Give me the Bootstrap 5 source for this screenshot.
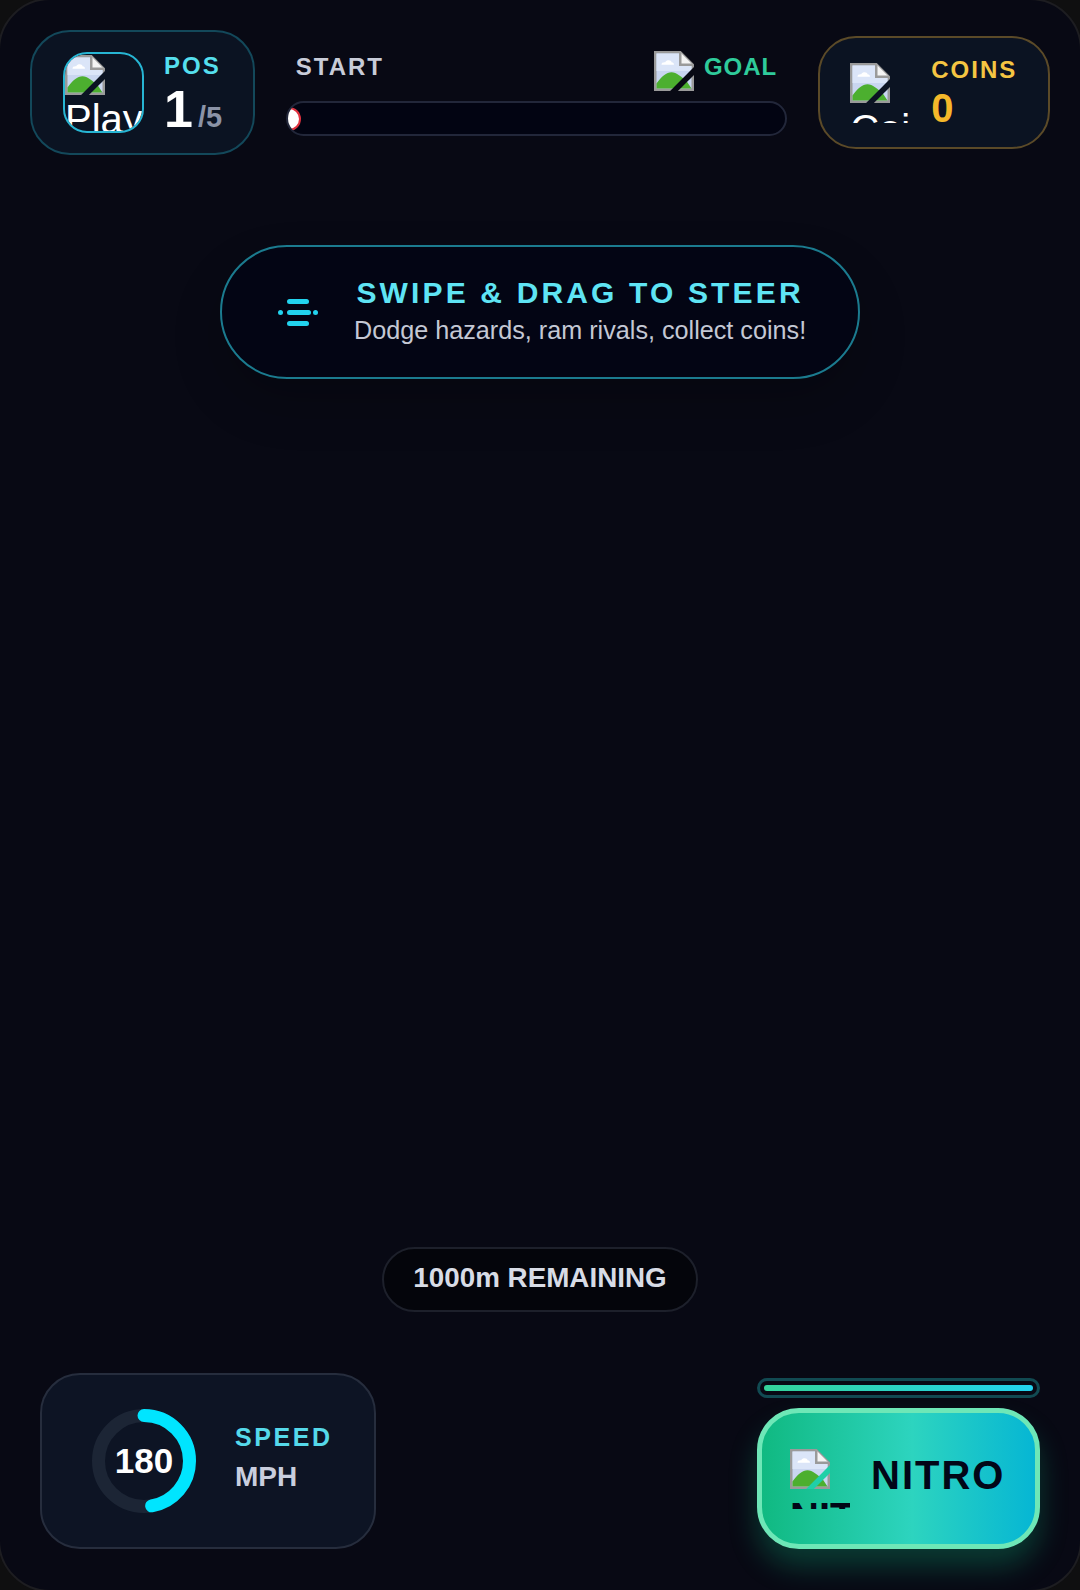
<!DOCTYPE html>
<html lang="en">
<head>
  <meta charset="UTF-8">
  <meta name="viewport" content="width=device-width, initial-scale=1.0">
  <title>Race HUD</title>
  <link href="https://cdn.jsdelivr.net/npm/bootstrap@5.3.0/dist/css/bootstrap.min.css" rel="stylesheet">
  <style>
    body {
      background-color: #0f0f10;
      font-family: "Liberation Sans", Arial, sans-serif;
      margin: 0;
      overflow: hidden;
    }
    .game-screen {
      width: 1084px;
      height: 1594px;
      margin: -2px;
      background-color: #080914;
      border: 2px solid #1d1d21;
      border-radius: 52px;
      overflow: hidden;
      padding: 30px 30px 41px;
    }
    .broken-pic {
      width: 40px;
      height: 40px;
      display: block;
      flex: none;
    }
    .hud-panel {
      background-color: #0b1322;
      border: 2px solid;
    }
    .pos-panel {
      width: 225px;
      height: 125px;
      border-color: #13485a;
      border-radius: 40px;
      padding-left: 31px;
      gap: 20px;
    }
    .player-pic {
      width: 81px;
      height: 81px;
      border: 2.5px solid #27b5d3;
      border-radius: 24px;
      overflow: hidden;
      color: #fff;
      font-size: 40px;
      line-height: 49px;
      padding-top: 1px;
      flex: none;
    }
    .player-pic .broken-pic { color: #0b1322; }
    .hud-label {
      font-size: 24px;
      font-weight: 700;
      letter-spacing: 2px;
      line-height: 28px;
    }
    .pos-info { padding-top: 6px; }
    .pos-label {
      color: #55dfee;
      margin-bottom: 3px;
    }
    .pos-num {
      color: #fff;
      font-size: 52px;
      font-weight: 700;
      line-height: 52px;
    }
    .pos-total {
      color: #8b93a7;
      font-size: 29px;
      font-weight: 700;
      margin-left: 5px;
    }
    .track-wrap {
      width: 502px;
      margin-left: 31px;
      margin-top: 20px;
    }
    .track-head {
      height: 42px;
      padding: 0 10px 0 10px;
      margin-bottom: 9px;
      gap: 10px;
    }
    .track-head .hud-label { margin-bottom: 8px; }
    .start-label { color: #c8ccd8; }
    .goal-label {
      color: #2fcb9b;
      letter-spacing: 1px;
    }
    .track-head .broken-pic { color: #080914; }
    .track-bar {
      height: 35px;
      background-color: #020412;
      border: 2px solid #22273a;
      border-radius: 18px;
      overflow: hidden;
    }
    .track-dot {
      width: 24px;
      height: 24px;
      background-color: #fff;
      border: 2.5px solid #e0323f;
      border-radius: 50%;
      margin-left: -11px;
      flex: none;
    }
    .coin-panel {
      width: 232px;
      height: 113px;
      border-color: #5b4a28;
      border-radius: 38px;
      margin-left: 31px;
      margin-top: 6px;
      padding-left: 30px;
      gap: 21px;
    }
    .coin-pic {
      width: 60px;
      height: 60px;
      overflow: hidden;
      color: #fff;
      font-size: 40px;
      line-height: 53px;
      flex: none;
    }
    .coin-pic .broken-pic { color: #0b1322; }
    .coin-label {
      color: #f5c542;
      margin-bottom: 2px;
    }
    .coin-num {
      color: #f5b82a;
      font-size: 40px;
      font-weight: 700;
      line-height: 44px;
    }
    .steer-hint {
      width: 640px;
      height: 134px;
      margin: 90px auto 0;
      background-color: #030514;
      border: 2.5px solid #1b7b8f;
      border-radius: 67px;
      box-shadow: 0 24px 50px rgba(0, 0, 0, .2);
      padding-left: 56px;
      gap: 36px;
    }
    .steer-icon { flex: none; }
    .steer-title {
      color: #5fe4f4;
      font-size: 30px;
      font-weight: 700;
      letter-spacing: 3.15px;
      line-height: 36px;
      margin-bottom: 3px;
    }
    .steer-text { margin-bottom: 3px; }
    .steer-sub {
      color: #c4c8d4;
      font-size: 25.2px;
      line-height: 32px;
    }
    .dist-pill {
      width: 316px;
      height: 65px;
      margin: 0 auto;
      padding-bottom: 4px;
      background-color: #04050b;
      border: 2px solid #1d202b;
      border-radius: 33px;
      color: #d8dce6;
      font-size: 27.8px;
      font-weight: 700;
    }
    .hud-bottom { margin-top: 61px; }
    .speed-panel {
      width: 336px;
      height: 176px;
      margin-left: 10px;
      background-color: #0d1424;
      border: 2px solid #262d3d;
      border-radius: 40px;
      padding-left: 50px;
      gap: 39px;
    }
    .speed-ring {
      width: 104px;
      height: 104px;
      flex: none;
    }
    .speed-num {
      color: #fff;
      font-size: 35px;
      font-weight: 700;
    }
    .speed-text { margin-bottom: 8px; }
    .speed-label {
      color: #55d9ea;
      font-size: 25px;
      font-weight: 700;
      letter-spacing: 2.6px;
      line-height: 30px;
      margin-bottom: 10px;
    }
    .speed-unit {
      color: #c9cede;
      font-size: 28px;
      font-weight: 700;
      line-height: 30px;
    }
    .nitro-col {
      width: 283px;
      margin-right: 10px;
      gap: 10px;
    }
    .nitro-meter {
      height: 20px;
      border: 3px solid #114a52;
      border-radius: 10px;
      padding: 4px;
    }
    .nitro-fill {
      height: 100%;
      border-radius: 3px;
      background-image: linear-gradient(90deg, #34d399, #22d3ee);
    }
    .nitro-btn {
      height: 141px;
      border: 5px solid #6ee7b7;
      border-radius: 42px;
      background-image: linear-gradient(90deg, #10b981, #2dd4bf 55%, #06b6d4);
      box-shadow: 0 18px 28px rgba(16, 185, 129, .28);
      padding-left: 28px;
      gap: 21px;
    }
    .nitro-pic {
      width: 60px;
      height: 60px;
      overflow: hidden;
      color: #020617;
      font-size: 40px;
      font-weight: 700;
      line-height: 57px;
      flex: none;
    }
    .nitro-pic .broken-pic { color: #1fd0a8; }
    .nitro-text {
      color: #020617;
      font-size: 40px;
      font-weight: 700;
      letter-spacing: 2px;
      margin-bottom: 8px;
    }
  </style>
</head>
<body>
  <svg width="0" height="0" class="d-block position-absolute">
    <symbol id="brokenPic" viewBox="0 0 16 16">
      <path d="M.5.5h10l5 5v10H.5z" fill="#c9d6f0" stroke="#9a9a9a"/>
      <path d="M1 1h9v4h5v3H1z" fill="#dbe5f8"/>
      <path d="M10.500.5v5h5" fill="#f4f4f4" stroke="#9a9a9a"/>
      <path d="M3 5.500c0-1 1-1 1.500-1C5 3.400 7 3.600 7 4.500c.7 0 1 .4 1 1z" fill="#fff"/>
      <path d="M1 15v-2C3 10.200 5 8.500 7 8.500c2 0 4 2 6 3.500l2 3z" fill="#4caf2f"/>
      <path d="M6.500 17.500 17 7" stroke="currentColor" stroke-width="2.200"/>
    </symbol>
  </svg>

  <div class="game-screen d-flex flex-column">
    <div class="d-flex align-items-start">
      <div class="hud-panel pos-panel d-flex align-items-center">
        <div class="player-pic">
          <svg class="broken-pic"><use href="#brokenPic"/></svg>
          Player
        </div>
        <div class="pos-info">
          <div class="hud-label pos-label">POS</div>
          <div class="d-flex align-items-baseline">
            <span class="pos-num">1</span><span class="pos-total">/5</span>
          </div>
        </div>
      </div>

      <div class="track-wrap">
        <div class="track-head d-flex align-items-center">
          <span class="hud-label start-label me-auto">START</span>
          <svg class="broken-pic"><use href="#brokenPic"/></svg>
          <span class="hud-label goal-label">GOAL</span>
        </div>
        <div class="track-bar d-flex align-items-center">
          <div class="track-dot"></div>
        </div>
      </div>

      <div class="hud-panel coin-panel d-flex align-items-center">
        <div class="coin-pic">
          <svg class="broken-pic"><use href="#brokenPic"/></svg>
          Coin
        </div>
        <div>
          <div class="hud-label coin-label">COINS</div>
          <div class="coin-num">0</div>
        </div>
      </div>
    </div>

    <div class="steer-hint d-flex align-items-center">
      <svg width="40" height="28" viewBox="0 0 40 28" fill="#22d3ee" class="steer-icon">
        <rect x="9" y="1" width="22" height="5" rx="2.500"/>
        <rect x="9" y="12" width="24" height="5" rx="2.500"/>
        <rect x="9" y="23" width="22" height="5" rx="2.500"/>
        <circle cx="2.500" cy="14.500" r="2.500"/>
        <circle cx="37.500" cy="14.500" r="2.500"/>
      </svg>
      <div class="steer-text text-center">
        <div class="steer-title">SWIPE &amp; DRAG TO STEER</div>
        <div class="steer-sub">Dodge hazards, ram rivals, collect coins!</div>
      </div>
    </div>

    <div class="dist-pill d-flex align-items-center justify-content-center mt-auto">1000m REMAINING</div>

    <div class="hud-bottom d-flex justify-content-between align-items-end">
      <div class="speed-panel d-flex align-items-center">
        <div class="speed-ring position-relative">
          <svg width="104" height="104" viewBox="0 0 104 104">
            <circle cx="52" cy="52" r="45.500" fill="none" stroke="#1c2535" stroke-width="13"/>
            <circle cx="52" cy="52" r="45.500" fill="none" stroke="#00e5ff" stroke-width="13" stroke-linecap="round" stroke-dasharray="135 286" transform="rotate(-90 52 52)"/>
          </svg>
          <div class="speed-num position-absolute top-50 start-50 translate-middle">180</div>
        </div>
        <div class="speed-text">
          <div class="speed-label">SPEED</div>
          <div class="speed-unit">MPH</div>
        </div>
      </div>

      <div class="nitro-col d-flex flex-column">
        <div class="nitro-meter"><div class="nitro-fill"></div></div>
        <div class="nitro-btn d-flex align-items-center">
          <div class="nitro-pic">
            <svg class="broken-pic"><use href="#brokenPic"/></svg>
            NITRO
          </div>
          <span class="nitro-text">NITRO</span>
        </div>
      </div>
    </div>
  </div>

  <script src="https://cdn.jsdelivr.net/npm/bootstrap@5.3.0/dist/js/bootstrap.bundle.min.js"></script>
</body>
</html>
